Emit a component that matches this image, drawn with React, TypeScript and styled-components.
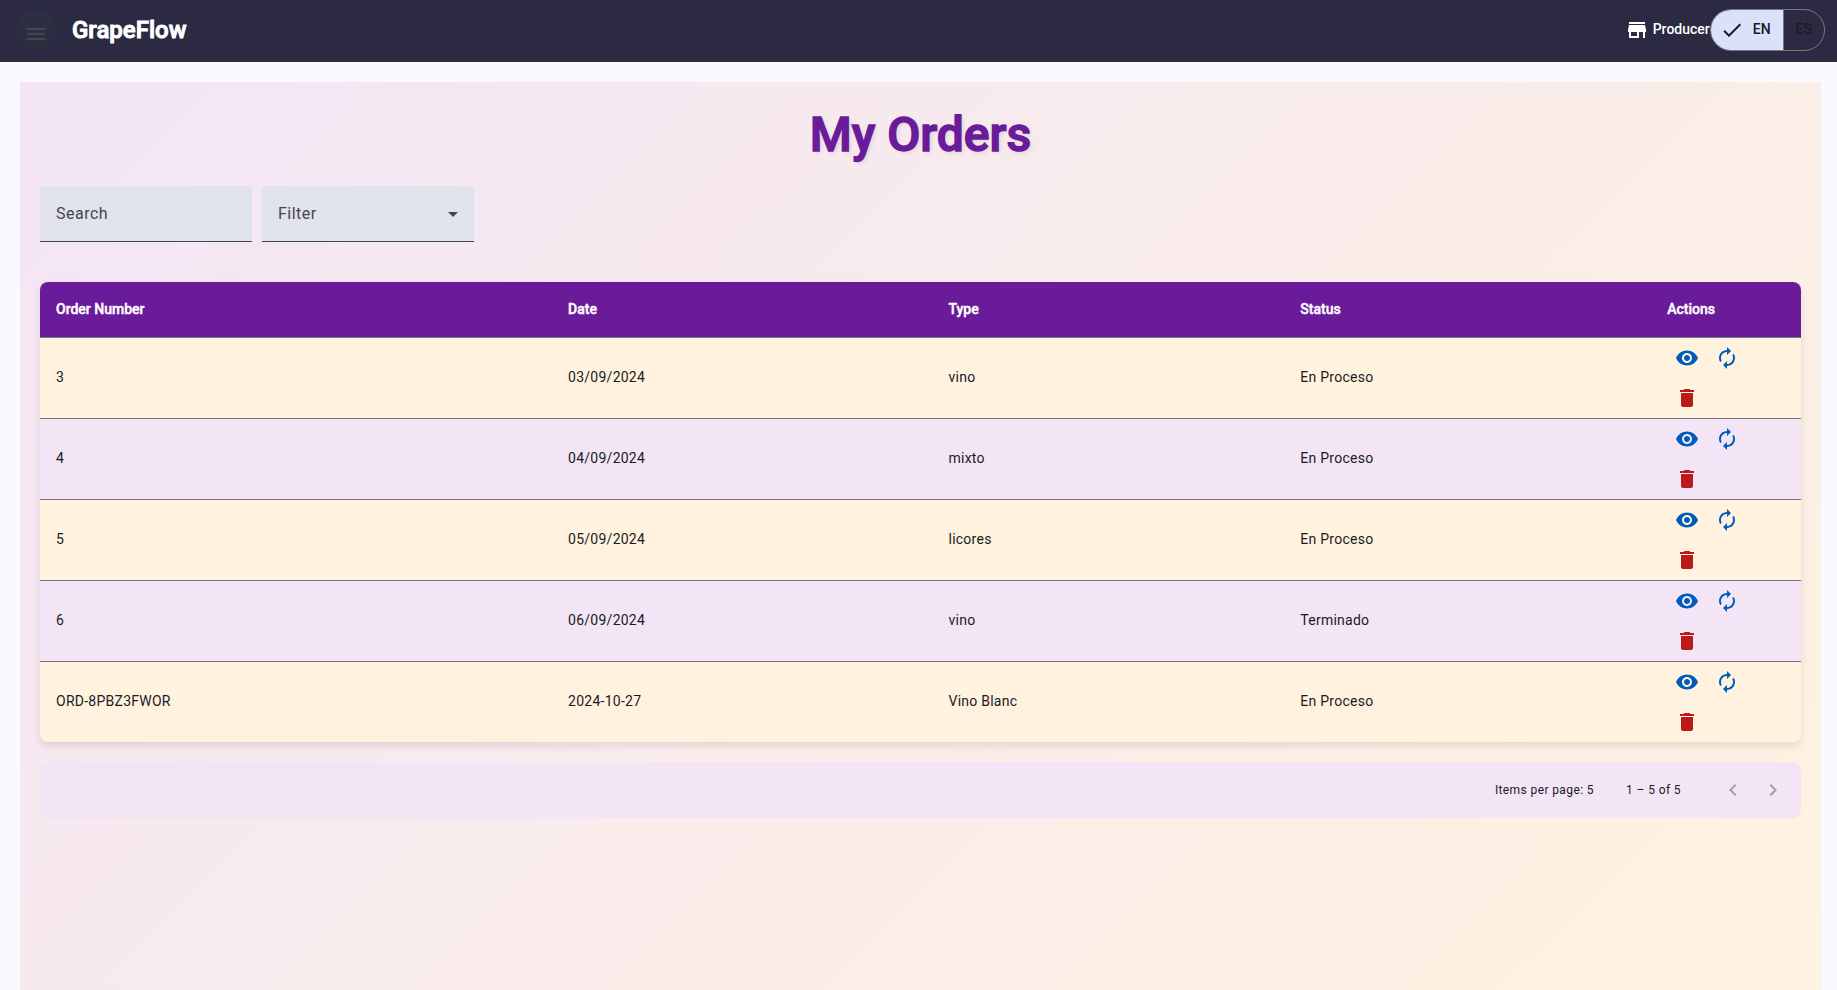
import React, { useState } from 'react';
import styled, { createGlobalStyle } from 'styled-components';
import {
  MdArrowDropDown,
  MdAutorenew,
  MdCheck,
  MdChevronLeft,
  MdChevronRight,
  MdDelete,
  MdMenu,
  MdStore,
  MdVisibility,
} from 'react-icons/md';

const GlobalStyle = createGlobalStyle`
  *, *::before, *::after { box-sizing: border-box; }
  body {
    margin: 0;
    background: #faf9fd;
    color: #1a1b1f;
    font-family: Roboto, sans-serif;
    font-size: 14px;
    line-height: 20px;
  }
  button, input, select { font: inherit; letter-spacing: inherit; color: inherit; }
`;

const Shell = styled.div`
  display: flex;
  flex-direction: column;
  height: 100vh;
`;

const Toolbar = styled.header`
  display: flex;
  align-items: center;
  flex: none;
  height: 62px;
  padding: 0 12px 2px 16px;
  background: #2b2a42;
  color: #fff;
`;

const MenuButton = styled.button`
  display: flex;
  justify-content: center;
  align-items: flex-end;
  width: 40px;
  height: 40px;
  padding: 0 0 4px;
  border: 0;
  border-radius: 50%;
  background: #2e2e42;
  color: #46464c;
  cursor: pointer;
`;

const Brand = styled.span`
  margin-left: 16px;
  font-size: 24px;
  line-height: 32px;
  font-weight: 500;
  -webkit-text-stroke: 0.04em currentColor;
`;

const ProfileLink = styled.a`
  display: flex;
  align-items: center;
  gap: 4px;
  margin-left: auto;
  color: #fff;
  font-weight: 500;
  text-decoration: none;

  > span { padding-bottom: 2px; }
`;

const LanguageGroup = styled.div`
  display: flex;
  height: 42px;
  border: 1px solid #74777f;
  border-radius: 21px;
  overflow: hidden;
`;

const LanguageButton = styled.button<{ $active: boolean }>`
  display: flex;
  align-items: center;
  gap: 9px;
  padding: 0 12px;
  padding-left: ${({ $active }) => ($active ? '9px' : '12px')};
  border: 0;
  background: ${({ $active }) => ($active ? '#dae2f9' : 'transparent')};
  color: ${({ $active }) => ($active ? '#131c2b' : '#1a1b1f')};
  font-weight: 500;
  cursor: pointer;

  & + & { border-left: 1px solid #74777f; }
  > span { padding-bottom: 2px; }
`;

const Main = styled.main`
  flex: 1;
  min-height: 0;
  padding: 20px 16px 20px 20px;
  overflow-y: auto;
  scrollbar-width: none;
`;

const OrdersPanel = styled.section`
  min-height: 100vh;
  padding: 20px;
  background: linear-gradient(135deg, #f3e5f5, #fff3e0);
`;

const Title = styled.h1`
  margin: 0 0 18px;
  color: #6a1b9a;
  font-size: 48px;
  line-height: 66px;
  font-weight: 500;
  -webkit-text-stroke: 0.03em currentColor;
  text-align: center;
  text-shadow: 2px 2px 4px rgba(0, 0, 0, 0.1);
`;

const Filters = styled.div`
  display: flex;
  flex-wrap: wrap;
  gap: 10px;
  margin-bottom: 40px;
`;

const Field = styled.div`
  display: grid;
  grid-template-areas: 'control';
  align-items: center;
  width: 212px;
  height: 56px;
  border-bottom: 1px solid #44474e;
  border-radius: 4px 4px 0 0;
  background: #e0e2ec;
  color: #44474e;
  font-size: 16px;
  line-height: 24px;
  letter-spacing: 0.03em;

  > * { grid-area: control; }
  > label { padding: 0 16px; pointer-events: none; z-index: 1; }
  > svg { justify-self: end; margin-right: 9px; pointer-events: none; }
  > input, > select {
    width: 100%;
    height: 100%;
    padding: 0 16px;
    border: 0;
    background: transparent;
    appearance: none;
    outline: none;
  }
  &:has(input:not(:placeholder-shown)) > label,
  &:has(select:valid) > label { visibility: hidden; }
`;

const TableCard = styled.div`
  margin-bottom: 20px;
  border-radius: 8px;
  overflow: hidden;
  box-shadow: 0 4px 8px rgba(0, 0, 0, 0.1);
`;

const OrdersTable = styled.table`
  width: 100%;
  table-layout: fixed;
  border-collapse: separate;
  border-spacing: 0;
  letter-spacing: 0.018em;
  text-align: left;
`;

const HeaderCell = styled.th<{ $share: number }>`
  width: ${({ $share }) => $share}%;
  height: 56px;
  padding: 0 16px 2px;
  border-bottom: 1px solid #74777f;
  background: #6a1b9a;
  color: #fff;
  font-weight: 500;
  -webkit-text-stroke: 0.03em currentColor;
  letter-spacing: normal;
`;

const Row = styled.tr`
  background: #f3e5f5;
  &:nth-child(odd) { background: #fff3e0; }
  &:not(:last-child) > td { border-bottom: 1px solid #74777f; }
`;

const Cell = styled.td`
  padding: 0 16px 2px;
`;

const ActionsCell = styled.td`
  padding: 0 16px;
`;

const Actions = styled.div`
  display: flex;
  flex-wrap: wrap;
  max-width: 119px;
`;

const IconButton = styled.button<{ $tone?: 'primary' | 'danger' }>`
  display: flex;
  justify-content: center;
  align-items: center;
  width: 40px;
  height: 40px;
  padding: 0;
  border: 0;
  background: transparent;
  color: ${({ $tone }) =>
    $tone === 'primary' ? '#005cbb' : $tone === 'danger' ? '#ba1a1a' : '#a79cab'};
  cursor: pointer;
  &:disabled { cursor: default; }
`;

const Paginator = styled.nav`
  display: flex;
  justify-content: flex-end;
  align-items: center;
  height: 56px;
  padding: 0 8px;
  border-radius: 8px;
  background: #f3e5f5;
  font-size: 12px;
  line-height: 16px;
  letter-spacing: 0.033em;
`;

const RangeLabel = styled.span`
  margin: 0 32px;
`;

const columns = [
  { name: 'Order Number', share: 29.08 },
  { name: 'Date', share: 21.6 },
  { name: 'Type', share: 19.98 },
  { name: 'Status', share: 20.83 },
  { name: 'Actions', share: 8.51 },
];

const orders = [
  { id: '3', date: '03/09/2024', type: 'vino', status: 'En Proceso' },
  { id: '4', date: '04/09/2024', type: 'mixto', status: 'En Proceso' },
  { id: '5', date: '05/09/2024', type: 'licores', status: 'En Proceso' },
  { id: '6', date: '06/09/2024', type: 'vino', status: 'Terminado' },
  { id: 'ORD-8PBZ3FWOR', date: '2024-10-27', type: 'Vino Blanc', status: 'En Proceso' },
];

export default function App() {
  const [language, setLanguage] = useState('EN');

  return (
    <Shell>
      <GlobalStyle />
      <Toolbar>
        <MenuButton type="button" aria-label="Menu">
          <MdMenu size={24} />
        </MenuButton>
        <Brand>GrapeFlow</Brand>
        <ProfileLink href="#producer">
          <MdStore size={24} />
          <span>Producer</span>
        </ProfileLink>
        <LanguageGroup role="group" aria-label="Language">
          {['EN', 'ES'].map((code) => (
            <LanguageButton
              key={code}
              type="button"
              $active={language === code}
              aria-pressed={language === code}
              onClick={() => setLanguage(code)}
            >
              {language === code && <MdCheck size={24} />}
              <span>{code}</span>
            </LanguageButton>
          ))}
        </LanguageGroup>
      </Toolbar>
      <Main>
        <OrdersPanel>
          <Title>My Orders</Title>
          <Filters>
            <Field>
              <label htmlFor="search">Search</label>
              <input id="search" type="text" placeholder=" " />
            </Field>
            <Field>
              <label htmlFor="filter">Filter</label>
              <select id="filter" required defaultValue="">
                <option value="" />
                <option value="process">En Proceso</option>
                <option value="done">Terminado</option>
              </select>
              <MdArrowDropDown size={24} />
            </Field>
          </Filters>
          <TableCard>
            <OrdersTable>
              <thead>
                <tr>
                  {columns.map(({ name, share }) => (
                    <HeaderCell key={name} $share={share} scope="col">
                      {name}
                    </HeaderCell>
                  ))}
                </tr>
              </thead>
              <tbody>
                {orders.map((order) => (
                  <Row key={order.id}>
                    <Cell>{order.id}</Cell>
                    <Cell>{order.date}</Cell>
                    <Cell>{order.type}</Cell>
                    <Cell>{order.status}</Cell>
                    <ActionsCell>
                      <Actions>
                        <IconButton type="button" $tone="primary" aria-label="View order">
                          <MdVisibility size={24} />
                        </IconButton>
                        <IconButton type="button" $tone="primary" aria-label="Update status">
                          <MdAutorenew size={24} />
                        </IconButton>
                        <IconButton type="button" $tone="danger" aria-label="Delete order">
                          <MdDelete size={24} />
                        </IconButton>
                      </Actions>
                    </ActionsCell>
                  </Row>
                ))}
              </tbody>
            </OrdersTable>
          </TableCard>
          <Paginator aria-label="Pagination">
            <span>Items per page: 5</span>
            <RangeLabel>1 – 5 of 5</RangeLabel>
            <IconButton type="button" aria-label="Previous page" disabled>
              <MdChevronLeft size={24} />
            </IconButton>
            <IconButton type="button" aria-label="Next page" disabled>
              <MdChevronRight size={24} />
            </IconButton>
          </Paginator>
        </OrdersPanel>
      </Main>
    </Shell>
  );
}
